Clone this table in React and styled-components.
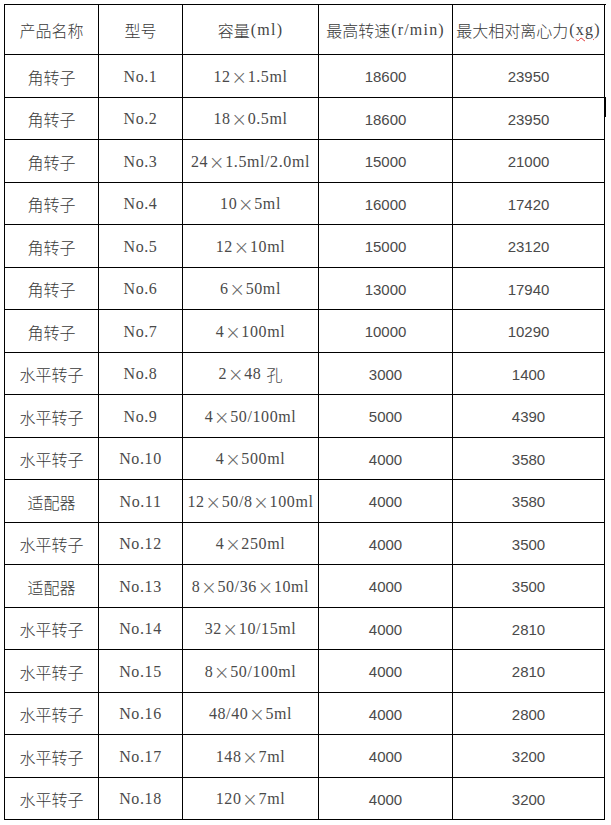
import React from 'react'
import styled, { createGlobalStyle } from 'styled-components'

// 离心机转子参数表

const GlobalStyle = createGlobalStyle`
    html, body {
        margin: 0;
        padding: 0;
        background: #ffffff;
    }
    body {
        font-family: "Noto Sans CJK SC", "Liberation Sans", sans-serif;
    }
`
const Page = styled.div`
    position: relative;
    padding: 4px;
    width: 611px;
    height: 825px;
    box-sizing: border-box;
`
const Grid = styled.div`
    display: grid;
    grid-template-columns: 94px 84px 136px 134px 152px;
    grid-template-rows: 50px repeat(9, 43px 42px);
    border-left: 1px solid #000;
    border-top: 1px solid #000;
    width: 601px;
`
const Cell = styled.div`
    display: flex;
    align-items: center;
    justify-content: center;
    box-sizing: border-box;
    border-right: 1px solid #000;
    border-bottom: 1px solid #000;
    white-space: nowrap;
    overflow: visible;
    color: ${p => (p.$kind ? '#4a4a4a' : '#3a3a3a')};
    font-size: ${p => (p.$kind === 'num' ? '15px' : '16px')};
    font-weight: 300;
    font-family: ${p => {
        if (p.$kind === 'mono') return '"Liberation Serif", "Noto Sans CJK SC", serif'
        if (p.$kind === 'num') return '"Liberation Sans", Arial, sans-serif'
        return '"Noto Sans CJK SC", "Noto Sans CJK JP", sans-serif'
    }};
    letter-spacing: ${p => (p.$kind === 'mono' ? '0.6px' : '0')};
    padding-top: 1px;
`
const Latin = styled.span`
    font-family: "Liberation Serif", serif;
    letter-spacing: 1.2px;
    margin-left: 1px;
    color: #444;
`
const Times = styled.span`
    display: inline-block;
    width: 17px;
    text-align: center;
    letter-spacing: 0;
    font-family: "DejaVu Sans", sans-serif;
    font-size: 19px;
    line-height: 16px;
    font-weight: 200;
    color: #666;
`
const Han = styled.span`
    font-family: "Noto Sans CJK SC", sans-serif;
    letter-spacing: 0;
    margin-left: 5px;
`
const Squiggle = styled.span`
    text-decoration: underline wavy #e03030;
    text-decoration-thickness: 1px;
    text-underline-offset: 2px;
`
const Caret = styled.div`
    position: absolute;
    left: 604px;
    top: 97px;
    width: 2px;
    height: 20px;
    background: #000;
`

const rows = [
    ['角转子', 'No.1', '12×1.5ml', '18600', '23950'],
    ['角转子', 'No.2', '18×0.5ml', '18600', '23950'],
    ['角转子', 'No.3', '24×1.5ml/2.0ml', '15000', '21000'],
    ['角转子', 'No.4', '10×5ml', '16000', '17420'],
    ['角转子', 'No.5', '12×10ml', '15000', '23120'],
    ['角转子', 'No.6', '6×50ml', '13000', '17940'],
    ['角转子', 'No.7', '4×100ml', '10000', '10290'],
    ['水平转子', 'No.8', '2×48孔', '3000', '1400'],
    ['水平转子', 'No.9', '4×50/100ml', '5000', '4390'],
    ['水平转子', 'No.10', '4×500ml', '4000', '3580'],
    ['适配器', 'No.11', '12×50/8×100ml', '4000', '3580'],
    ['水平转子', 'No.12', '4×250ml', '4000', '3500'],
    ['适配器', 'No.13', '8×50/36×10ml', '4000', '3500'],
    ['水平转子', 'No.14', '32×10/15ml', '4000', '2810'],
    ['水平转子', 'No.15', '8×50/100ml', '4000', '2810'],
    ['水平转子', 'No.16', '48/40×5ml', '4000', '2800'],
    ['水平转子', 'No.17', '148×7ml', '4000', '3200'],
    ['水平转子', 'No.18', '120×7ml', '4000', '3200'],
]

// 把 × 和汉字单独拿出来，按全角宽度显示
const Volume = ({ text }) => {
    const parts = text.split(/(×|孔)/)
    return parts.map((part, i) => {
        if (part === '×') return <Times key={i}>×</Times>
        if (part === '孔') return <Han key={i}>孔</Han>
        return <span key={i}>{part}</span>
    })
}

const App = () => {
    return (
        <>
            <GlobalStyle />
            <Page>
                <Grid>
                    <Cell>产品名称</Cell>
                    <Cell>型号</Cell>
                    <Cell>容量<Latin>(ml)</Latin></Cell>
                    <Cell>最高转速<Latin>(r/min)</Latin></Cell>
                    <Cell>最大相对离心力<Latin>(<Squiggle>xg</Squiggle>)</Latin></Cell>
                    {rows.map(row => (
                        <React.Fragment key={row[1]}>
                            <Cell>{row[0]}</Cell>
                            <Cell $kind="mono">{row[1]}</Cell>
                            <Cell $kind="mono"><Volume text={row[2]} /></Cell>
                            <Cell $kind="num">{row[3]}</Cell>
                            <Cell $kind="num">{row[4]}</Cell>
                        </React.Fragment>
                    ))}
                </Grid>
                <Caret />
            </Page>
        </>
    )
}
export default App
